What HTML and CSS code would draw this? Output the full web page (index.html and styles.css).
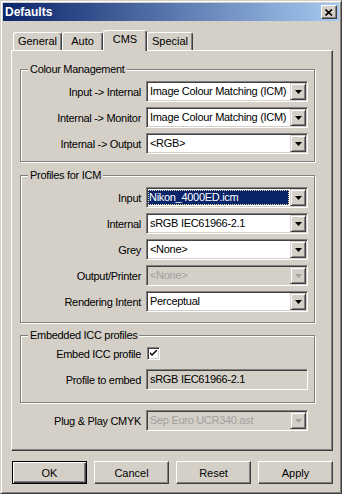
FILE: index.html
```html
<!DOCTYPE html>
<html lang="en">
<head>
    <meta charset="UTF-8">
    <title>Defaults</title>
    <link rel="stylesheet" href="styles.css">
</head>
<body>
    <div class="window">
        <div class="titlebar">
            <span class="title">Defaults</span>
            <button class="close-btn">
                <svg width="8" height="7" viewBox="0 0 8 7"><path d="M0.5 0.5 L7 6.5 M7 0.5 L0.5 6.5" stroke="#000" stroke-width="1.6" fill="none"/></svg>
            </button>
        </div>

        <div class="content">
            <div class="tabs">
                <div class="tab tab-general">General</div>
                <div class="tab tab-auto">Auto</div>
                <div class="tab tab-cms active">CMS</div>
                <div class="tab tab-special">Special</div>
            </div>

            <div class="panel">
                <div class="group group-cm">
                    <span class="group-title">Colour Management</span>
                    <div class="rows">
                        <div class="row">
                            <label>Input -&gt; Internal</label>
                            <div class="combo"><span class="value">Image Colour Matching (ICM)</span><span class="arrow"><svg width="7" height="4" viewBox="0 0 7 4"><polygon points="0,0 7,0 3.5,4"/></svg></span></div>
                        </div>
                        <div class="row">
                            <label>Internal -&gt; Monitor</label>
                            <div class="combo"><span class="value">Image Colour Matching (ICM)</span><span class="arrow"><svg width="7" height="4" viewBox="0 0 7 4"><polygon points="0,0 7,0 3.5,4"/></svg></span></div>
                        </div>
                        <div class="row">
                            <label>Internal -&gt; Output</label>
                            <div class="combo"><span class="value">&lt;RGB&gt;</span><span class="arrow"><svg width="7" height="4" viewBox="0 0 7 4"><polygon points="0,0 7,0 3.5,4"/></svg></span></div>
                        </div>
                    </div>
                </div>

                <div class="group group-icm">
                    <span class="group-title">Profiles for ICM</span>
                    <div class="rows">
                        <div class="row">
                            <label>Input</label>
                            <div class="combo"><span class="value selected">Nikon_4000ED.icm</span><span class="arrow"><svg width="7" height="4" viewBox="0 0 7 4"><polygon points="0,0 7,0 3.5,4"/></svg></span></div>
                        </div>
                        <div class="row">
                            <label>Internal</label>
                            <div class="combo"><span class="value">sRGB IEC61966-2.1</span><span class="arrow"><svg width="7" height="4" viewBox="0 0 7 4"><polygon points="0,0 7,0 3.5,4"/></svg></span></div>
                        </div>
                        <div class="row">
                            <label>Grey</label>
                            <div class="combo"><span class="value">&lt;None&gt;</span><span class="arrow"><svg width="7" height="4" viewBox="0 0 7 4"><polygon points="0,0 7,0 3.5,4"/></svg></span></div>
                        </div>
                        <div class="row">
                            <label>Output/Printer</label>
                            <div class="combo disabled"><span class="value">&lt;None&gt;</span><span class="arrow"><svg width="7" height="4" viewBox="0 0 7 4"><polygon points="0,0 7,0 3.5,4"/></svg></span></div>
                        </div>
                        <div class="row">
                            <label>Rendering Intent</label>
                            <div class="combo"><span class="value">Perceptual</span><span class="arrow"><svg width="7" height="4" viewBox="0 0 7 4"><polygon points="0,0 7,0 3.5,4"/></svg></span></div>
                        </div>
                    </div>
                </div>

                <div class="group group-embed">
                    <span class="group-title">Embedded ICC profiles</span>
                    <div class="rows">
                        <div class="row">
                            <label>Embed ICC profile</label>
                            <div class="field-slot">
                                <span class="checkbox"><svg width="7" height="7" viewBox="0 0 7 7"><path d="M0 2 L0 4 L2 6 L7 1 L7 -1 L2 4 Z" fill="#000"/></svg></span>
                            </div>
                        </div>
                        <div class="row">
                            <label>Profile to embed</label>
                            <div class="edit readonly">sRGB IEC61966-2.1</div>
                        </div>
                    </div>
                </div>

                <div class="plain">
                    <div class="row">
                        <label>Plug &amp; Play CMYK</label>
                        <div class="combo disabled"><span class="value">Sep Euro UCR340.ast</span><span class="arrow"><svg width="7" height="4" viewBox="0 0 7 4"><polygon points="0,0 7,0 3.5,4"/></svg></span></div>
                    </div>
                </div>
            </div>

            <div class="buttons">
                <button class="btn default">OK</button>
                <button class="btn">Cancel</button>
                <button class="btn">Reset</button>
                <button class="btn">Apply</button>
            </div>
        </div>
    </div>
</body>
</html>
```

FILE: styles.css
```css
* {
    box-sizing: border-box;
}
body {
    margin: 0; background: #d4d0c8;
    font-family: 'Liberation Sans', Arial, sans-serif; font-size: 11px; color: #000;
}
.window {
    width: 342px; height: 494px; padding: 2px; background: #d4d0c8;
    border: 1px solid; border-color: #d4d0c8 #404040 #404040 #d4d0c8;
    box-shadow: inset 1px 1px #fff, inset -1px -1px #808080;
}
.titlebar {
    height: 18px; padding: 0 2px;
    background: linear-gradient(to right, #0a246a, #a6caf0);
    display: flex; align-items: center; justify-content: space-between;
}
.title {
    color: #fff; font-weight: bold; font-size: 12px;
}
.close-btn {
    width: 16px; height: 14px; padding: 0; background: #d4d0c8;
    border: 1px solid; border-color: #fff #404040 #404040 #fff;
    box-shadow: inset -1px -1px #808080;
    display: flex; align-items: center; justify-content: center;
}

/* --- tabs --- */
.content {
    padding: 9px 0 0 8px;
}
.tabs {
    display: flex; align-items: flex-end; height: 20px; margin-left: 2px;
    position: relative; z-index: 1;
}
.tab {
    height: 18px; line-height: 17px; text-align: center; background: #d4d0c8;
    border: 1px solid; border-bottom: none; border-color: #fff #404040 #fff #fff;
    border-radius: 3px 3px 0 0;
    box-shadow: inset -1px 0 #808080;
}
.tab-general { width: 49px; }
.tab-auto { width: 41px; }
.tab-cms { width: 44px; }
.tab-special { width: 46px; }
.tab.active {
    height: 21px; margin-bottom: -1px; line-height: 16px;
}

/* --- panel & groups --- */
.panel {
    width: 322px; height: 401px; padding: 18px 0 0 8px;
    border: 1px solid; border-color: #fff #404040 #404040 #fff;
    box-shadow: inset -1px -1px #808080;
}
.group {
    position: relative; width: 295px;
    border: 1px solid #808080;
    box-shadow: inset 1px 1px #fff, 1px 1px #fff;
}
.group-title {
    position: absolute; top: -7px; left: 7px; padding: 0 2px;
    line-height: 13px; background: #d4d0c8; letter-spacing: -0.3px;
}
.group-cm { height: 93px; padding-top: 11px; }
.group-icm { height: 148px; padding-top: 11px; margin-top: 13px; }
.group-embed { height: 68px; padding-top: 7px; margin-top: 12px; }
.plain { width: 295px; padding-right: 7px; margin-top: 7px; }
.rows {
    display: flex; flex-direction: column; gap: 5px;
}
.row {
    display: flex; justify-content: flex-end; align-items: center; gap: 5px;
    height: 21px; padding-right: 6px;
}
.row label {
    letter-spacing: -0.3px; white-space: nowrap;
}
.plain .row { padding-right: 0; }

/* --- controls --- */
.combo, .edit {
    width: 162px; height: 21px; padding: 1px; display: flex;
    background: #fff; letter-spacing: -0.3px;
    border: 1px solid; border-color: #808080 #fff #fff #808080;
    box-shadow: inset 1px 1px #404040, inset -1px -1px #d4d0c8;
}
.value {
    flex: 1; padding-left: 2px; line-height: 17px; white-space: nowrap; overflow: hidden;
}
.value.selected {
    margin: 1px 1px 1px 0; padding-left: 1px; line-height: 15px;
    background: #0a246a; color: #fff;
    outline: 1px dotted #e8e4a0; outline-offset: -1px;
}
.arrow {
    width: 16px; height: 17px; flex: none; background: #d4d0c8;
    border: 1px solid; border-color: #d4d0c8 #404040 #404040 #d4d0c8;
    box-shadow: inset 1px 1px #fff, inset -1px -1px #808080;
    display: flex; align-items: center; justify-content: center;
}
.arrow svg { fill: #000; }
.combo.disabled { background: #d4d0c8; }
.combo.disabled .value { color: #a0a0a0; }
.combo.disabled .arrow svg { fill: #a0a0a0; }
.edit.readonly {
    background: #d4d0c8; padding-left: 3px; line-height: 17px;
}
.field-slot {
    width: 162px; display: flex;
}
.checkbox {
    width: 13px; height: 13px; margin-left: 1px; background: #fff;
    border: 1px solid; border-color: #808080 #fff #fff #808080;
    box-shadow: inset 1px 1px #404040, inset -1px -1px #d4d0c8;
    display: flex; align-items: center; justify-content: center;
}

/* --- buttons --- */
.buttons {
    display: flex; justify-content: space-between;
    width: 321px; margin: 10px 0 0 1px;
}
.btn {
    width: 75px; height: 23px; padding: 0; font: inherit; color: #000;
    background: #d4d0c8;
    border: 1px solid; border-color: #fff #404040 #404040 #fff;
    box-shadow: inset -1px -1px #808080;
}
.btn.default {
    border-color: #000;
    box-shadow: inset 1px 1px #fff, inset -1px -1px #404040, inset -2px -2px #808080;
}
```
